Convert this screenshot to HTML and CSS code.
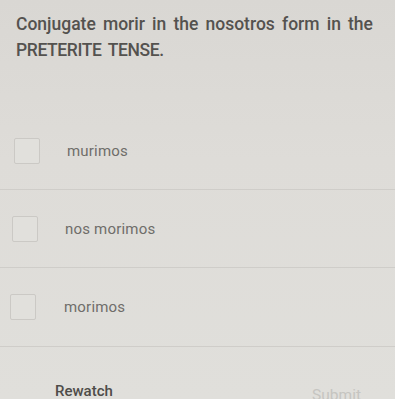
FILE: index.html
```html
<!DOCTYPE html>
<html>
<head>
<meta charset="utf-8">
<link rel="stylesheet" href="styles.css">
</head>
<body>
<div class="page">
  <div class="question">Conjugate morir in the nosotros form in the <span class="caps">PRETERITE TENSE.</span></div>
  <ul class="options">
    <li class="option"><span class="box"></span><span class="label">murimos</span></li>
    <li class="option"><span class="box"></span><span class="label">nos morimos</span></li>
    <li class="option"><span class="box"></span><span class="label">morimos</span></li>
  </ul>
  <div class="actions">
    <span class="btn rewatch">Rewatch</span>
    <span class="btn submit">Submit</span>
  </div>
</div>
</body>
</html>
```
FILE: styles.css
```css
html, body {
  margin: 0;
  padding: 0;
}
body {
  width: 395px;
  height: 399px;
  overflow: hidden;
  background: linear-gradient(180deg, #d9d7d3 0%, #dedcd8 40%, #e0dfdb 100%);
  font-family: Roboto, "Liberation Sans", sans-serif;
}
.page {
  display: flex;
  flex-direction: column;
}
.question {
  padding: 11px 10px 0 16px;
  font-size: 17.5px;
  font-weight: 500;
  line-height: 26px;
  word-spacing: 2.8px;
  color: #54524f;
  height: 101px;
}
.caps {
  letter-spacing: -0.4px;
}
.options {
  list-style: none;
  margin: 0;
  padding: 0;
  border-bottom: 1px solid #cfcdc9;
}
.option {
  display: flex;
  align-items: center;
  height: 78px;
  border-bottom: 1px solid #cfcdc9;
  box-sizing: border-box;
}
.option:last-child {
  border-bottom: none;
}
.box {
  width: 26px;
  height: 26px;
  margin-left: 14px;
  border: 1px solid #cbc9c5;
  border-radius: 2px;
  background: #e1e0dc;
  box-sizing: border-box;
}
.label {
  margin-left: 27px;
  font-size: 15px;
  color: #6f6d6a;
  letter-spacing: 0.2px;
}
.options .option:nth-child(2) .box { margin-left: 12px; }
.options .option:nth-child(3) .box { margin-left: 10px; }
.options .option:nth-child(2) .label { margin-left: 27px; }
.options .option:nth-child(3) .label { margin-left: 28px; }
.actions {
  display: flex;
  justify-content: space-between;
  align-items: flex-start;
  height: 52px;
  padding: 0 34px 0 55px;
}
.btn {
  font-size: 15px;
  font-weight: 500;
  line-height: 18px;
}
.rewatch {
  color: #4e4c49;
  margin-top: 35px;
}
.submit {
  color: #c6c5c1;
  font-weight: 400;
  font-size: 15.5px;
  margin-top: 39px;
}
```
